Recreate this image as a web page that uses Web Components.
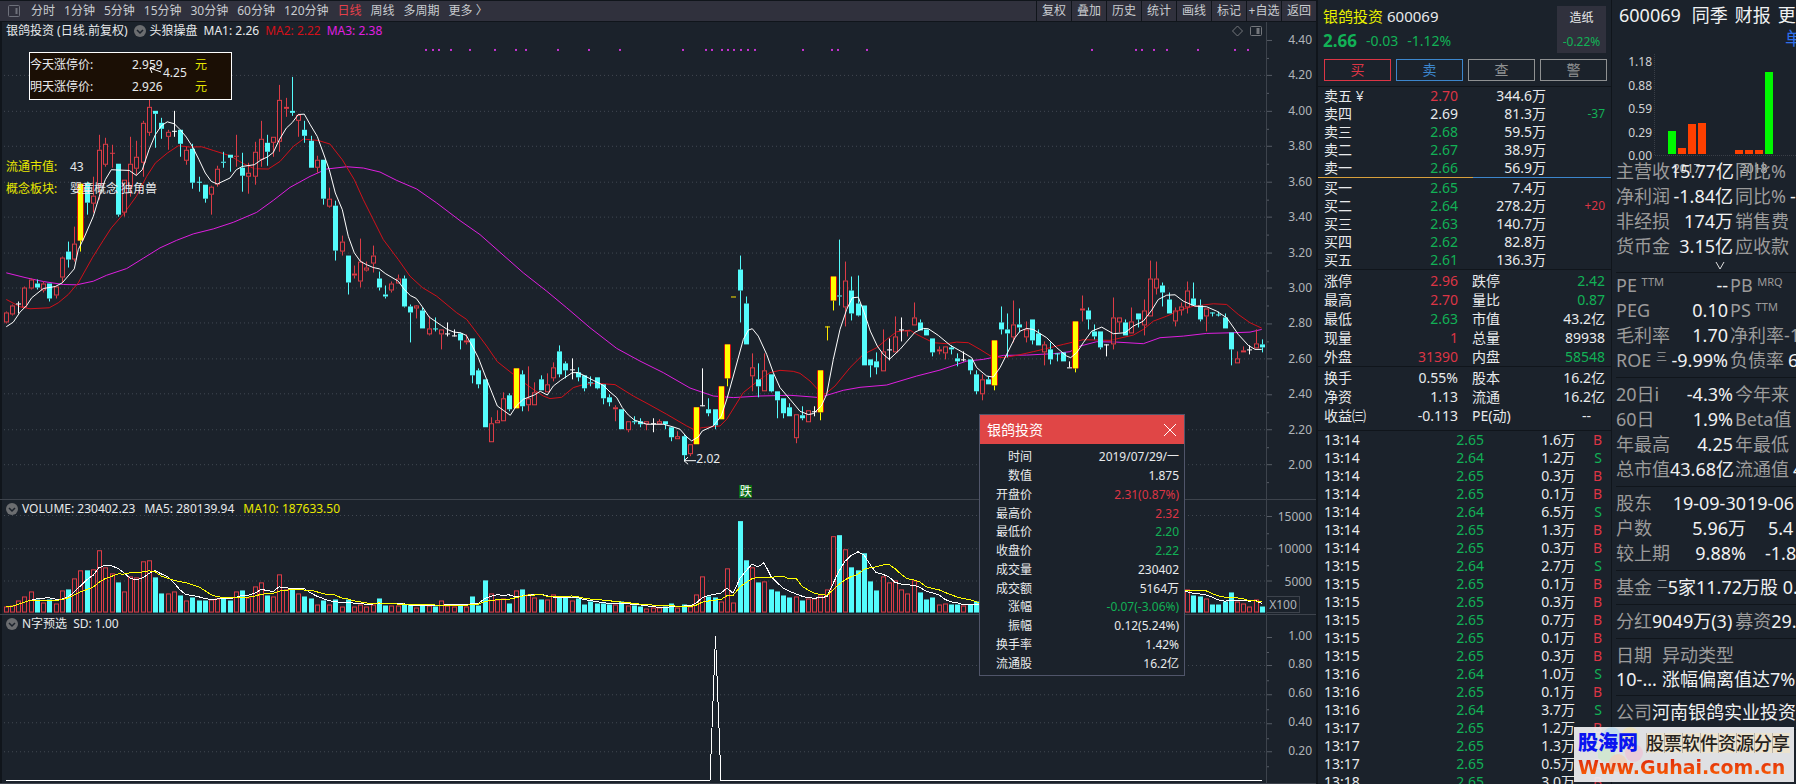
<!DOCTYPE html>
<html lang="zh-CN">
<head>
<meta charset="utf-8">
<title>银鸽投资 600069</title>
<style>
html,body{margin:0;height:100%}
body{background:#1b222b;color:#e8eaec;font:12px/16px "Noto Sans","Noto Sans CJK SC",sans-serif;overflow:hidden;
--red:#dc3545;--green:#12b156;--line:#10151b;--axis:#3d434c;--dim:#9b9b9b}
</style>
</head>
<body>
<trade-app></trade-app>
<script>
const define=(name,html,init)=>{
  const t=document.createElement('template');t.innerHTML=html;
  customElements.define(name,class extends HTMLElement{
    constructor(){super();this.attachShadow({mode:'open'}).append(t.content.cloneNode(true))}
    connectedCallback(){if(init&&!this.ready){this.ready=true;init(this,this.shadowRoot)}}
  });
};

/* Candles: kind, body top, body bottom, high, low (0 = no wick), in thirds of a chart pixel. */
const CANDLES=`r 939 968 936 970;r 918 944 914 948;w 913 913 906 942;r 865 925 862 0;r 840 866 838 871;c 851 864 840 870;r 852 873 845 878;c 852 898 0 906;r 862 887 0 898;r 774 834 771 850
c 756 780 726 803;r 733 780 680 785;y 553 724 0 755;c 548 608 545 645;r 588 611 532 640;r 451 558 404 600;r 432 494 415 502;r 459 459 435 505;c 492 645 0 650;r 540 638 0 650
r 492 560 412 590;r 472 507 422 527;r 370 488 362 530;r 322 398 300 408;c 334 342 0 443;c 369 387 354 417;r 395 412 390 450;w 392 392 334 410;c 391 432 0 470;r 450 482 440 496
c 448 548 432 567;c 547 547 530 575;c 556 597 0 608;r 561 584 558 645;r 508 556 498 560;c 487 490 457 503;c 466 473 0 517;r 467 471 404 500;c 503 528 460 575;r 518 530 490 582
r 457 530 425 555;r 417 480 363 500;c 429 456 404 497;r 411 430 0 470;r 301 425 255 455;r 321 328 294 352;c 333 338 231 347;r 345 363 343 410;c 390 408 363 430;c 423 503 408 0
r 480 505 467 520;c 480 598 0 614;r 598 620 565 625;c 618 752 603 782;r 727 757 708 768;c 768 849 0 885;r 823 828 798 836;r 785 845 717 864;r 803 812 785 817;r 768 791 738 820
c 837 864 816 872;c 885 890 858 898;r 852 872 847 878;r 838 852 825 0;c 837 921 828 925;c 920 938 915 1028;r 919 928 917 958;c 932 987 925 0;r 988 1004 950 1006;c 988 988 953 995
r 991 1004 0 1051;w 1003 1003 968 1012;w 1008 1008 990 1010;c 1003 1023 998 1050;r 1024 1030 1005 1034;c 1017 1128 0 1152;c 1113 1155 1108 1166;c 1140 1283 0 0;r 1273 1328 1253 0;r 1264 1273 1233 0
r 1198 1265 1178 0;c 1187 1230 1182 1235;y 1107 1227 0 0;c 1124 1221 1113 1235;r 1197 1217 1100 1236;r 1180 1217 1150 0;c 1140 1173 1128 0;r 1156 1178 1122 0;r 1104 1136 1090 1146;c 1056 1124 1038 1133
c 1092 1112 1085 1136;w 1109 1109 1077 1140;c 1119 1134 1104 1146;c 1128 1167 0 1175;c 1148 1152 1130 1160;c 1134 1167 0 1170;c 1155 1196 0 1214;c 1194 1208 1185 1220;r 1225 1231 1218 1265;c 1229 1290 0 0
r 1267 1293 0 1300;c 1265 1270 1250 1276;c 1266 1276 1258 1283;r 1267 1276 0 1292;w 1272 1272 1256 1298;r 1267 1276 1260 0;c 1266 1276 0 1290;c 1283 1314 0 1326;r 1311 1321 1296 0;c 1311 1368 1305 1385
r 1335 1364 0 1372;y 1224 1334 0 0;w 1217 1217 1107 1220;c 1231 1241 1197 1250;c 1229 1277 0 1290;y 1161 1260 0 0;y 1035 1136 0 1160;d 892 892 0 0;c 810 872 768 968;c 912 1035 891 0
r 1105 1130 1063 1175;c 1140 1160 1092 1195;r 1113 1175 1062 0;c 1125 1175 0 1180;c 1176 1202 0 1257;c 1197 1242 0 1257;c 1224 1250 1212 0;r 1244 1317 0 1332;c 1248 1257 1220 1262;r 1232 1268 0 0
w 1237 1237 1222 1250;y 1113 1238 0 1262;d 982 982 0 1022;y 831 903 0 932;c 887 890 720 918;r 844 923 785 980;c 873 942 830 963;c 912 948 828 952;c 918 1097 0 0;c 1080 1097 0 1133
c 1086 1103 1058 1126;r 1057 1115 990 0;w 1051 1051 1017 1083;r 1012 1060 950 0;w 991 991 955 1025;r 992 997 0 1010;r 955 978 908 0;c 969 992 960 0;c 989 1007 0 0;c 1017 1058 0 1070
r 1050 1057 1040 1065;r 1040 1061 0 1080;c 1045 1051 1037 1065;c 1077 1086 1063 1102;w 1081 1081 1055 1085;c 1079 1112 0 1124;c 1125 1176 1112 1184;r 1141 1184 1125 1203;c 1140 1155 1130 0;y 1023 1157 0 1172
c 969 989 922 1005;c 990 1001 942 1075;r 976 1013 903 1030;c 975 985 927 998;r 990 1013 965 1028;c 960 1024 0 1035;c 1002 1037 990 0;r 1035 1058 1025 1098;c 1051 1080 1030 1095;c 1062 1062 0 1085
c 1060 1087 0 0;w 1103 1103 1085 0;y 967 1106 0 1118;r 928 934 888 965;c 933 959 925 990;c 997 1011 975 1020;c 996 1044 0 1050;w 1036 1036 0 1070;r 955 1035 893 1050;r 955 970 0 1000
c 969 1007 960 0;r 967 1003 923 0;c 942 959 0 985;r 934 978 900 1007;r 838 950 782 0;r 838 866 785 885;c 858 878 850 922;c 900 942 880 0;r 933 967 925 980;r 922 933 908 948
r 874 923 845 942;c 897 917 850 0;c 918 960 900 965;r 928 950 0 996;c 940 940 0 952;c 944 944 935 952;c 954 987 942 0;c 999 1050 0 1098;r 1078 1093 1055 0;r 1053 1060 1042 0
w 1051 1051 1038 1065;r 1031 1046 990 0;c 1035 1044 1020 1058`.split(/[;\n]/).map(s=>{const[k,...n]=s.split(' ');return[k,...n.map(Number)]});

/* Volume bar heights in thirds of a chart pixel, one for each candle. */
const VOLUMES=`18 20 36 48 63 39 30 39 27 66 70 103 126 127 129 186 135 118 91 63 107 105 153 157 106 58 58 63 52 36 46 37 37 40 43 45 37 63 67 45 78 90 52 48 114 70 70 57 49 43 24 37 23 39 19 40 19 24 19 25 43 20 21 21 24 23 15 22 20 17 36 21 19 23 19 49 22 97 57 40 42 28 66 70 54 46 40 39 54 45 45 36 42 25 32 26 27 25 24 33 21 20 18 12 15 15 17 27 14 24 19 55 107 49 45 34 131 29 273 155 134 90 92 69 64 51 45 49 36 41 43 51 68 227 231 188 135 127 177 93 66 107 90 95 68 56 96 60 39 45 25 27 24 24 20 24 32 30 28 34 46 60 64 50 40 36 34 30 28 26 30 34 90 84 60 52 44 40 58 52 46 50 44 60 108 92 74 60 56 52 69 52 48 41 24 24 33 60 34 26 18 38 18`.split(' ').map(Number);

const MA1='19,982 40,968 60,938 80,918 95,895 130,867 166,861 187,850 223,808 235,750 252,715 280,650 298,590 316,540 334,510 355,511 388,512 409,527 427,510 447,450 466,405 484,378 502,366 523,372 541,390 559,412 577,440 597,480 616,520 634,545 652,553 690,535 709,510 727,500 763,495 784,480 802,472 820,458 838,420 859,385 877,368 895,344 913,343 931,375 952,410 970,460 988,510 1006,580 1027,630 1045,710 1063,760 1081,785 1099,795 1120,804 1138,808 1156,822 1195,845 1213,870 1231,888 1249,897 1267,922 1288,953 1324,978 1342,990 1362,998 1381,1000 1399,1008 1417,1040 1435,1075 1456,1130 1474,1175 1492,1220 1510,1233 1531,1248 1549,1220 1570,1200 1603,1187 1621,1176 1642,1187 1660,1160 1682,1143 1717,1120 1735,1120 1780,1143 1810,1158 1830,1178 1850,1195 1867,1225 1885,1247 1903,1262 1940,1275 1990,1275 2020,1283 2040,1290 2060,1313 2075,1325 2095,1313 2107,1295 2140,1280 2164,1250 2182,1195 2200,1130 2230,1020 2245,992 2257,988 2275,1010 2300,1065 2320,1120 2340,1165 2370,1200 2400,1236 2425,1246 2440,1243 2464,1220 2480,1185 2500,1080 2520,990 2540,930 2557,895 2575,893 2593,940 2611,995 2632,1040 2650,1065 2668,1080 2700,1050 2745,998 2770,987 2785,988 2815,1008 2850,1037 2890,1060 2915,1075 2930,1105 2960,1130 2980,1133 3000,1105 3020,1065 3045,1015 3060,995 3080,987 3100,990 3140,1015 3170,1045 3200,1070 3212,1075 3230,1060 3250,1030 3275,995 3305,983 3340,1003 3375,1000 3400,980 3430,965 3455,932 3475,900 3500,887 3525,886 3550,905 3585,920 3620,922 3650,935 3680,955 3715,1005 3745,1038 3765,1050 3785,1050';
const MA2='19,900 60,922 90,928 148,925 175,910 205,885 235,850 277,775 310,722 334,685 373,640 409,590 440,530 466,490 502,460 535,438 570,442 605,441 640,452 690,468 727,490 763,507 805,508 840,485 880,440 910,418 955,422 990,433 1027,480 1063,540 1090,600 1120,660 1150,720 1195,780 1230,830 1267,864 1310,890 1370,940 1400,960 1430,1000 1460,1040 1492,1087 1540,1125 1565,1145 1600,1170 1630,1190 1650,1198 1685,1194 1720,1165 1750,1156 1790,1152 1845,1156 1900,1190 1950,1217 2000,1245 2060,1280 2080,1290 2110,1285 2160,1280 2180,1260 2230,1180 2280,1140 2310,1120 2340,1113 2380,1116 2400,1122 2430,1145 2455,1172 2475,1185 2505,1160 2550,1105 2590,1065 2630,1045 2660,1020 2690,997 2730,992 2750,1005 2800,1030 2840,1033 2870,1028 2905,1030 2940,1050 2975,1072 3010,1075 3050,1068 3100,1057 3150,1045 3190,1035 3250,1021 3330,1023 3400,1007 3430,990 3460,965 3500,950 3540,932 3580,920 3640,913 3680,915 3715,945 3750,970 3785,986';
const MA3='19,820 75,834 130,846 190,855 230,856 280,845 320,827 380,807 430,776 480,745 530,722 580,703 640,688 700,668 770,638 820,602 870,563 930,530 980,508 1040,501 1090,505 1140,517 1190,542 1250,568 1310,610 1380,663 1440,705 1500,758 1570,820 1640,875 1700,925 1770,985 1850,1047 1920,1085 1990,1120 2070,1166 2140,1190 2200,1195 2280,1190 2370,1188 2400,1190 2460,1195 2480,1188 2530,1173 2580,1164 2660,1157 2700,1145 2750,1130 2820,1112 2900,1085 2950,1080 3010,1068 3080,1067 3160,1063 3210,1057 3240,1040 3290,1027 3350,1028 3430,1033 3480,1015 3550,1010 3620,1002 3700,1000 3750,998 3785,990';
const SIGNALS=[426,433,439,451,470,495,516,526,558,589,620,683,706,712,722,728,734,741,748,755,803,832,838,867,1092,1136,1142,1154,1167,1198,1235,1248];

const RED='#dc3c46',CYAN='#54fcfc';
const slot=i=>Math.floor((19+18.654*i)/3);
const rect=(x,y,w,h,f)=>`<rect x="${x}" y="${y}" width="${w}" height="${Math.max(h,1)}" fill="${f}"/>`;
const hollow=(x,y,w,h)=>`<rect x="${x+.5}" y="${y+.5}" width="${w-1}" height="${Math.max(h-1,1)}" fill="#1b222b" fill-opacity=".6" stroke="${RED}"/>`;
const dotted=ys=>ys.map(y=>`<path d="M4 ${Math.round(y)+.5}H1266" stroke="#414852" stroke-dasharray="1 3"/>`).join('');
const poly=(pts,c)=>`<polyline points="${pts}" fill="none" stroke="${c}" shape-rendering="crispEdges"/>`;
const thirds=s=>s.split(' ').map(p=>p.split(',').map(v=>(v/3).toFixed(1)).join()).join(' ');

function candleArt(){
  let s=dotted(Array.from({length:12},(_,i)=>75.3+i*35.45));
  SIGNALS.forEach(x=>s+=rect(x-1,49,2,2,'#c832d2'));
  s+=poly(thirds(MA3),'#e01ee0')+poly(thirds(MA2),'#d2101a');
  CANDLES.forEach(([k,t,b,h,l],i)=>{
    const x=slot(i),c={r:RED,c:CYAN,w:'#fff',y:'#ffff00',d:'#ffe600'}[k];
    const T=Math.round(t/3),B=Math.round(b/3);
    if(h)s+=rect(x,Math.round(h/3),1,T-Math.round(h/3),c);
    if(l)s+=rect(x,B,1,Math.round(l/3)-B,c);
    if(k==='y')s+=rect(x-3,T,7,B-T,'#d81010')+rect(x-2,T,5,B-T,c);
    else if(k==='r'&&B-T>1)s+=hollow(x-2,T,5,B-T);
    else s+=rect(x-2,T,5,B-T,c);
  });
  s+=poly(thirds(MA1),'#fff');
  s+='<path d="M696 461.5H684M688 458l-4 3.5l4 3.5" fill="none" stroke="#fff"/>';
  return s;
}
function volumeArt(){
  let s=dotted([516,549,581]);
  VOLUMES.forEach((v,i)=>{
    const x=slot(i),h=Math.round(v/3);
    s+=CANDLES[i][0]==='c'?rect(x-2,613-h,5,h,CYAN):hollow(x-2,613-h,5,h);
  });
  const mean=n=>VOLUMES.map((_,i)=>{const w=VOLUMES.slice(Math.max(0,i-n+1),i+1);return slot(i)+','+(613-w.reduce((a,b)=>a+b)/w.length/3).toFixed(1)}).join(' ');
  return s+poly(mean(5),'#fff')+poly(mean(10),'#ffff00');
}
const signalArt=()=>dotted([665,694,722,751])+'<path d="M6 780.5H710L715.500 636L721 780.500H1262" fill="none" stroke="#fff" shape-rendering="crispEdges"/>';

define('trade-app',`<style>
:host{display:grid;grid-template-columns:minmax(0,1fr) 296px 184px;height:100vh;overflow:hidden}
.left{display:flex;flex-direction:column;min-width:0;position:relative;border-top:1px solid var(--line);box-sizing:border-box}
.price{flex:479}.vol{flex:114}.sig{flex:169}
</style>
<div class="left"><tool-bar></tool-bar>
<chart-panel class="price" kind="price"></chart-panel>
<chart-panel class="vol" kind="volume"></chart-panel>
<chart-panel class="sig" kind="signal"></chart-panel>
<day-card></day-card></div>
<quote-panel></quote-panel><finance-panel></finance-panel><site-mark></site-mark>`);

define('tool-bar',`<style>
:host{display:flex;justify-content:space-between;height:21px;background:#30313d;box-sizing:border-box;border-bottom:1px solid var(--line)}
div{display:flex}
.tabs{gap:9px;padding-left:8px;align-items:center}
svg{margin-right:2px}
button{all:unset;color:#c9ccd0;font:inherit;white-space:nowrap;line-height:20px}
.on{color:#e5404a}
.acts button{width:34px;text-align:center;border-left:1px solid var(--line)}
</style>
<div class="tabs"><svg width="12" height="12" fill="none" stroke="#6e717b"><rect x=".5" y=".5" width="11" height="11" rx="1"/><path d="M8.500 3v6" stroke-width="2"/></svg></div><div class="acts"></div>`,(h,r)=>{
  const add=(sel,names)=>names.forEach(n=>{const b=document.createElement('button');b.textContent=n;if(n==='日线')b.className='on';r.querySelector(sel).append(b)});
  add('.tabs',['分时','1分钟','5分钟','15分钟','30分钟','60分钟','120分钟','日线','周线','多周期','更多 〉']);
  add('.acts',['复权','叠加','历史','统计','画线','标记','+自选','返回']);
});

define('fold-button',`<style>:host{display:inline-flex}button{all:unset;width:12px;height:12px;display:block}svg{display:block}</style>
<button aria-label="指标菜单"><svg width="12" height="12"><circle cx="6" cy="6" r="6" fill="#6b6d70"/><path d="M3 5l3 3l3-3" fill="none" stroke="#1b222b" stroke-width="1.500"/></svg></button>`);

define('chart-panel',`<style>
:host{display:grid;grid-template-columns:minmax(0,1fr) 50px;min-height:0;position:relative;border-bottom:1px solid var(--axis);box-sizing:border-box}
.plot{position:relative;min-height:0;box-shadow:inset 3px 0 0 -1px var(--line)}
.art{position:absolute;inset:0;width:100%;height:100%}
.head{position:relative;display:flex;gap:6px;align-items:center;padding:1px 0 0 6px;white-space:nowrap}
.head.wide{gap:9px}
.head fold-button{margin-right:-2px}
.head.wide fold-button{margin-right:-5px}
.y{color:#e8e800}.r{color:#d2101a}.m{color:#e01ee0}
.tools{position:absolute;right:4px;top:3px}
.axis{position:relative;border-left:1px solid var(--axis);display:flex;flex-direction:column;justify-content:space-between;text-align:right;color:#b0b4b9;min-height:0}
.ticks{position:absolute;left:0;top:0;width:6px;height:100%}
.unit{position:absolute;left:0;bottom:1px;border:1px solid var(--axis);border-left:0;width:32px;line-height:15px;text-align:center;background:#1b222b}
.limit{position:absolute;left:29px;top:30px;width:201px;height:46px;border:1px solid #fff;background:#1b0f05;display:grid;grid-template-columns:102px 63px 1fr;row-gap:6px;align-content:center}
.limit b,.facts b{font-weight:400;color:#e8e800}
.facts{position:absolute;left:6px;top:137px;display:grid;grid-template-columns:64px auto;row-gap:6px}
.facts span{white-space:nowrap}
.note{position:absolute;white-space:nowrap}
.arrow{position:absolute;left:149px;top:44px}
.fall{background:#0b6a16;color:#fff;line-height:13px;width:13px;text-align:center}
</style><div class="plot"></div><div class="axis"></div>`,(h,r)=>{
  const k=h.getAttribute('kind'),plot=r.querySelector('.plot'),axis=r.querySelector('.axis');
  const cfg={
    price:{y:22,hh:478,art:candleArt,pad:'10px 4px 26px 0',lab:['4.40','4.20','4.00','3.80','3.60','3.40','3.20','3.00','2.80','2.60','2.40','2.20','2.00'],t0:40,dt:35.45,
      head:`<span>银鸽投资 (日线.前复权)</span><fold-button></fold-button><span>头狼操盘</span><span>MA1: 2.26</span><span class="r">MA2: 2.22</span><span class="m">MA3: 2.38</span>`,
      extra:`<svg class="tools" width="30" height="12" fill="none" stroke="#74777c"><path d="M5.500 1l5 5l-5 5l-5-5z"/><rect x="18.500" y="1.500" width="11" height="9" rx="1"/><path d="M26 3v6" stroke-width="3"/></svg>
<div class="limit"><span>今天涨停价:</span><span>2.959</span><b>元</b><span>明天涨停价:</span><span>2.926</span><b>元</b></div>
<div class="facts"><b>流通市值:</b><span>43</span><b>概念板块:</b><span>婴童概念 独角兽</span></div>
<svg class="arrow" width="14" height="8"><path d="M12 6L1 2M5 0L1 2l2 5" fill="none" stroke="#fff"/></svg>
<span class="note" style="left:163px;top:43px">4.25</span>
<span class="note" style="left:55%;top:90%">2.02</span>
<span class="note fall" style="left:58.400%;top:97%">跌</span>`},
    volume:{y:501,hh:113,art:volumeArt,pad:'9px 4px 24px 0',lab:['15000','10000','5000'],t0:516.5,dt:32,
      head:`<fold-button></fold-button><span>VOLUME: 230402.23</span><span>MA5: 280139.94</span><span class="y">MA10: 187633.50</span>`,extra:''},
    signal:{y:615,hh:168,art:signalArt,pad:'13px 4px 24px 0',lab:['1.00','0.80','0.60','0.40','0.20'],t0:636.5,dt:28.7,
      head:`<fold-button></fold-button><span>N字预选</span><span>SD: 1.00</span>`,extra:''}
  }[k];
  plot.innerHTML=`<svg class="art" viewBox="0 ${cfg.y} 1266 ${cfg.hh}" preserveAspectRatio="none">${cfg.art()}</svg><div class="head ${k==='volume'?'wide':''}">${cfg.head}</div>${cfg.extra}`;
  let d='';
  cfg.lab.forEach((_,i)=>{const y=Math.round(cfg.t0+i*cfg.dt)+.5;d+=`M0 ${y}h5M0 ${Math.round(y+cfg.dt/2)+.5}h2`});
  axis.style.padding=cfg.pad;
  axis.innerHTML=`<svg class="ticks" viewBox="0 ${cfg.y} 6 ${cfg.hh}" preserveAspectRatio="none"><path d="${d}" stroke="#565c65"/></svg>`+cfg.lab.map(t=>`<span>${t}</span>`).join('')+(k==='volume'?'<span class="unit">X100</span>':'');
});

define('day-card',`<style>
:host{position:absolute;left:74.400%;top:413px;width:204px;border:1px solid #50556a;background:#1b222b;display:block}
header{display:flex;justify-content:space-between;align-items:center;background:#e04646;color:#fff;height:29px;padding:0 8px 0 7px;font-size:14px}
button{all:unset;width:12px;height:12px}svg{display:block}
dl{margin:0;padding:4px 5px 2px 0;height:225px;display:grid;grid-template-columns:52px 1fr;grid-auto-rows:1fr;align-items:center;text-align:right}
dd{margin:0}.u{color:var(--red)}.d{color:var(--green)}
</style><header><span>银鸽投资</span><button aria-label="关闭"><svg width="12" height="12"><path d="M0 0l12 12M12 0L0 12" stroke="#fff"/></svg></button></header><dl></dl>`,(h,r)=>{
  r.querySelector('dl').innerHTML=[['时间','2019/07/29/一'],['数值','1.875'],['开盘价','2.31(0.87%)','u'],['最高价','2.32','u'],['最低价','2.20','d'],['收盘价','2.22','d'],['成交量','230402'],['成交额','5164万'],['涨幅','-0.07(-3.06%)','d'],['振幅','0.12(5.24%)'],['换手率','1.42%'],['流通股','16.2亿']]
  .map(([a,b,c=''])=>`<dt>${a}</dt><dd class="${c}">${b}</dd>`).join('');
});

define('quote-panel',`<style>
:host{display:block;border-left:2px solid var(--line);border-right:1px solid var(--line);box-sizing:border-box;overflow:hidden;font-size:14px;line-height:18px}
.top{display:flex;justify-content:space-between;padding:6px 5px 0 5px}
h1{margin:0;font-size:15px;line-height:20px;font-weight:400;display:flex;gap:4px}
h1 b{font-weight:400;color:#e8f000}
.now{display:flex;gap:9px;align-items:center;color:var(--green);margin-top:5px;line-height:20px}
.now b{font-size:17px}
.ind{background:#30313d;width:49px;height:47px;font-size:12px;text-align:center;display:flex;flex-direction:column;justify-content:space-between;line-height:24px}
.btns{display:grid;grid-template-columns:repeat(4,1fr);gap:5px;padding:6px 4px 5px 6px;border-bottom:1px solid var(--line)}
.btns button{all:unset;box-sizing:border-box;height:22px;border:1px solid;text-align:center;font-size:14px;line-height:20px;color:#8f9192}
.btns .b{color:var(--red)}.btns .s{color:#3c86cc}
table{border-collapse:collapse;table-layout:fixed;width:100%;border-bottom:1px solid var(--line)}
td,th{padding:0;font-weight:400;text-align:right;white-space:nowrap;height:18px}
th{text-align:left;padding-left:6px}
.stat{margin-top:1px}
.stat td,.stat th{height:19px}
.stat th+td+th{padding-left:14px}
.r{color:var(--red)}.g{color:var(--green)}.sm{font-size:12px}
.split{height:1px;margin-bottom:1px;background:linear-gradient(90deg,#d8a03c 53%,#3c86cc 53%)}
.ask{border:0}
td:last-child{padding-right:6px}
</style>
<div class="top"><div><h1><b>银鸽投资</b>600069</h1><div class="now"><b>2.66</b><span>-0.03</span><span>-1.12%</span></div></div>
<div class="ind"><span>造纸</span><span class="g">-0.22%</span></div></div>
<div class="btns"><button class="b">买</button><button class="s">卖</button><button>查</button><button>警</button></div>
<table class="ask"></table><div class="split"></div><table class="bid"></table><table class="stat s1"></table><table class="stat s2"></table><table class="tick"></table>`,(h,r)=>{
  const book=(sel,rows)=>r.querySelector(sel).innerHTML='<colgroup><col><col style="width:60px"><col style="width:88px"><col style="width:65px"></colgroup>'+rows.map(([a,b,c,d='',k='g',m='g'])=>`<tr><th scope="row">${a}</th><td class="${k}">${b}</td><td>${c}</td><td class="sm ${m}">${d}</td></tr>`).join('');
  book('.ask',[['卖五 ¥','2.70','344.6万','','r'],['卖四','2.69','81.3万','-37','w'],['卖三','2.68','59.5万'],['卖二','2.67','38.9万'],['卖一','2.66','56.9万']]);
  book('.bid',[['买一','2.65','7.4万'],['买二','2.64','278.2万','+20','g','r'],['买三','2.63','140.7万'],['买四','2.62','82.8万'],['买五','2.61','136.3万']]);
  const stat=(sel,rows)=>r.querySelector(sel).innerHTML='<colgroup><col><col style="width:70px"><col style="width:77px"><col style="width:76px"></colgroup>'+rows.map(([a,b,k,c,d,m])=>`<tr><th scope="row">${a}</th><td class="${k}">${b}</td><th scope="row">${c}</th><td class="${m}">${d}</td></tr>`).join('');
  stat('.s1',[['涨停','2.96','r','跌停','2.42','g'],['最高','2.70','r','量比','0.87','g'],['最低','2.63','g','市值','43.2亿',''],['现量','1','r','总量','89938',''],['外盘','31390','r','内盘','58548','g']]);
  stat('.s2',[['换手','0.55%','','股本','16.2亿',''],['净资','1.13','','流通','16.2亿',''],['收益㈢','-0.113','','PE(动)','--&emsp;','']]);
  r.querySelector('.s2').insertAdjacentHTML('beforeend','<tfoot><tr><td colspan="4" style="height:5px;line-height:5px"></td></tr></tfoot>');
  const t='13:14 2.65 1.6 B,13:14 2.64 1.2 S,13:14 2.65 0.3 B,13:14 2.65 0.1 B,13:14 2.64 6.5 S,13:14 2.65 1.3 B,13:14 2.65 0.3 B,13:15 2.64 2.7 S,13:15 2.65 0.1 B,13:15 2.65 0.3 B,13:15 2.65 0.7 B,13:15 2.65 0.1 B,13:15 2.65 0.3 B,13:16 2.64 1.0 S,13:16 2.65 0.1 B,13:16 2.64 3.7 S,13:17 2.65 1.2 B,13:17 2.65 1.3 B,13:17 2.65 0.5 B,13:18 2.65 3.0 B';
  r.querySelector('.tick').innerHTML='<colgroup><col><col style="width:60px"><col style="width:91px"><col style="width:36px"></colgroup>'+t.split(',').map(s=>{const[a,b,c,d]=s.split(' ');return`<tr><th scope="row">${a}</th><td class="g">${b}</td><td>${c}万</td><td class="${d==='B'?'r':'g'}" style="padding-right:9px">${d}</td></tr>`}).join('');
});

define('finance-panel',`<style>
:host{display:block;overflow:hidden;font-size:18px;line-height:25px;padding-left:4px;white-space:nowrap;color:#f0f1f2}
nav{display:flex;gap:7px;padding:3px 0 0 3px;width:230px}
nav a,nav span{color:inherit;text-decoration:none}
nav span{margin-right:4px}
.sub{display:block;padding-left:169px;height:22px;line-height:20px;color:#2f6fe8;text-decoration:none}
figure{margin:0;position:relative;height:109px;font-size:12px;line-height:16px}
figure svg{position:absolute;left:0;top:0}
.lab{position:absolute;left:0;top:4px;width:36px;height:110px;display:flex;flex-direction:column;justify-content:space-between;text-align:right;color:#d0d2d4}
.yr{position:absolute;top:111px;color:#c0c2c4}
section{border-bottom:1px solid var(--line);padding:4px 0}
section.first,section.pe{padding-top:0}
section.first{padding-bottom:0}
.row{display:grid;grid-template-columns:117px auto;column-gap:2px;width:300px;position:relative}
.pe .row{grid-template-columns:112px auto}
.own .row{grid-template-columns:130px auto;column-gap:1px}
.row>div{display:flex;justify-content:space-between}
.row>div+div{justify-content:flex-start;gap:4px}
.own .row>div+div{gap:0}
.news .row{grid-template-columns:44px auto;line-height:24px}
i{font-style:normal;color:var(--dim)}
sup{font-size:11px;line-height:12px;vertical-align:6px;color:var(--dim)}
.more{all:unset;display:block;height:13px;padding-left:99px}
.more svg{display:block}
.line{display:flex}
</style>
<nav><span>600069</span><a href="#q">同季</a><a href="#r">财报</a><a href="#m">更多</a></nav><a class="sub" href="#u">单</a>
<figure><svg width="180" height="109"><path d="M38.500 4V105.500H180" fill="none" stroke="#3a3f47" stroke-dasharray="1 1"/></svg><div class="lab"><span>1.18</span><span>0.88</span><span>0.59</span><span>0.29</span><span>0.00</span></div><span class="yr" style="left:57px">2017</span><span class="yr" style="left:124px">2018</span></figure>
<div id="body"></div>`,(h,r)=>{
  r.querySelector('svg').innerHTML+=[[52,23,1],[62,6],[72,30],[82,31],[119,4],[129,4],[139,4],[149,82,1]].map(([x,v,g])=>rect(x,104-v,8,v,g?'#00f800':'#ff4000')).join('');
  const rows=a=>a.map(([l,v,m,n=''])=>`<div class="row"><div><i>${l}</i><span>${v}</span></div><div><i>${m}</i><span>${n}</span></div></div>`).join('');
  r.querySelector('#body').innerHTML=
  `<section class="first">${rows([['主营收','15.77亿','同比%'],['净利润','-1.84亿','同比%','-'],['非经损','174万','销售费'],['货币金','3.15亿','应收款']])}<button class="more" aria-label="展开"><svg width="10" height="10"><path d="M1 1l4 7l4-7" fill="none" stroke="#e0e0e0"/></svg></button></section>
<section class="pe">${rows([['PE <sup>TTM</sup>','--','PB <sup>MRQ</sup>'],['PEG','0.10','PS <sup>TTM</sup>'],['毛利率','1.70','净利率-1'],['ROE <sup>三</sup>','-9.99%','负债率','6']])}</section>
<section>${rows([['20日i','-4.3%','今年来'],['60日','1.9%','Beta值'],['年最高','4.25','年最低'],['总市值','43.68亿','流通值','4']])}</section>
<section class="own">${rows([['股东','19-09-30','','19-06'],['户数','5.96万','','&ensp;&ensp;&thinsp;5.4'],['较上期','9.88%','','&ensp;&ensp;-1.8']])}</section>
<section><div class="line"><i>基金 <sup>二</sup></i>5家11.72万股 0.</div></section>
<section><div class="line"><i>分红</i>9049万(3)&thinsp;<i>募资</i>29.</div></section>
<section class="news"><div class="row"><i>日期</i><i>异动类型</i><span>10-...</span><span>涨幅偏离值达7%.</span></div></section>
<section><div class="line"><i>公司</i>河南银鸽实业投资.</div></section>`;
});

define('site-mark',`<style>
:host{position:absolute;right:2px;bottom:2px;width:220px;height:55px;box-sizing:border-box;padding:3px 4px;background:rgba(240,241,243,.92);white-space:nowrap;overflow:hidden;display:block}
.bg{position:absolute;left:24px;top:0}
.a{position:relative;display:flex;gap:8px;align-items:center;line-height:26px}
b{color:#0a14f0;font-size:20px;font-weight:900}
span{color:#26221c;font-size:18px;line-height:20px;font-weight:500;background:repeating-linear-gradient(90deg,#b9b5ae 0 1px,#ece3cf 1px 18px)}
a{position:relative;display:block;font:bold 19px/23px "DejaVu Sans",sans-serif;text-decoration:none;color:#e03010;background:linear-gradient(#d81e10,#ff6a00);-webkit-background-clip:text;background-clip:text;-webkit-text-fill-color:transparent}
</style><svg class="bg" width="60" height="55" opacity=".5"><circle cx="14" cy="9" r="9" fill="#a8d8f4"/><circle cx="32" cy="9" r="9" fill="#f8e4a0"/><circle cx="8" cy="26" r="9" fill="#c4ecc0"/><circle cx="36" cy="26" r="9" fill="#f4b8d0"/><circle cx="20" cy="36" r="9" fill="#f8c8a0"/></svg>
<div class="a"><b>股海网</b><span>股票软件资源分享</span></div><a href="#home">Www.Guhai.com.cn</a>`);
</script>
</body>
</html>
